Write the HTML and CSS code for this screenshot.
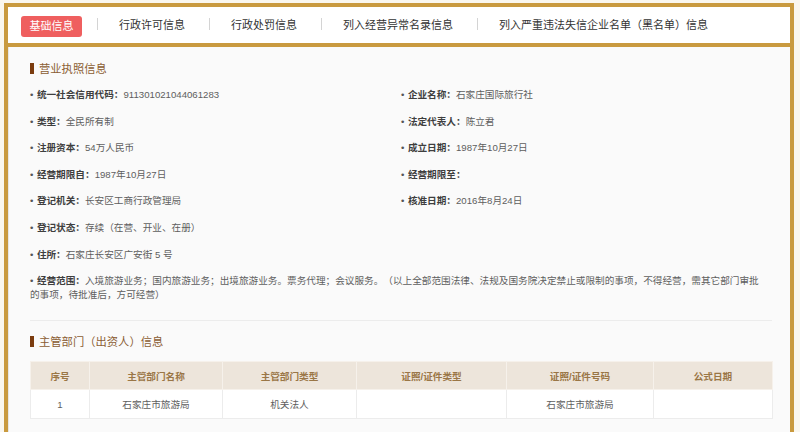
FILE: index.html
```html
<!DOCTYPE html>
<html lang="zh-CN">
<head>
    <meta charset="UTF-8">
    <title>基础信息</title>
    <link rel="stylesheet" href="styles.css">
</head>
<body>
    <div class="wrap">
        <ul class="tabs">
            <li class="tab active">基础信息</li>
            <li class="tab">行政许可信息</li>
            <li class="tab">行政处罚信息</li>
            <li class="tab">列入经营异常名录信息</li>
            <li class="tab">列入严重违法失信企业名单（黑名单）信息</li>
        </ul>

        <div class="panel">
            <!-- 营业执照信息 -->
            <div class="section">
                <h3 class="title">营业执照信息</h3>
                <ul class="info">
                    <li><span class="dot">•</span><b>统一社会信用代码：</b>911301021044061283</li>
                    <li><span class="dot">•</span><b>企业名称：</b>石家庄国际旅行社</li>
                    <li><span class="dot">•</span><b>类型：</b>全民所有制</li>
                    <li><span class="dot">•</span><b>法定代表人：</b>陈立君</li>
                    <li><span class="dot">•</span><b>注册资本：</b>54万人民币</li>
                    <li><span class="dot">•</span><b>成立日期：</b>1987年10月27日</li>
                    <li><span class="dot">•</span><b>经营期限自：</b>1987年10月27日</li>
                    <li><span class="dot">•</span><b>经营期限至：</b></li>
                    <li><span class="dot">•</span><b>登记机关：</b>长安区工商行政管理局</li>
                    <li><span class="dot">•</span><b>核准日期：</b>2016年8月24日</li>
                    <li><span class="dot">•</span><b>登记状态：</b>存续（在营、开业、在册）</li>
                    <li class="solo"><span class="dot">•</span><b>住所：</b>石家庄长安区广安街 5 号</li>
                    <li class="full"><span class="dot">•</span><b>经营范围：</b>入境旅游业务；国内旅游业务；出境旅游业务。票务代理；会议服务。（以上全部范围法律、法规及国务院决定禁止或限制的事项，不得经营，需其它部门审批<br>的事项，待批准后，方可经营）</li>
                </ul>
            </div>

            <!-- 主管部门（出资人）信息 -->
            <div class="section">
                <h3 class="title">主管部门（出资人）信息</h3>
                <table class="grid">
                    <colgroup>
                        <col style="width: 59px">
                        <col style="width: 133px">
                        <col style="width: 134px">
                        <col style="width: 150px">
                        <col style="width: 147px">
                        <col style="width: 119px">
                    </colgroup>
                    <thead>
                        <tr>
                            <th>序号</th>
                            <th>主管部门名称</th>
                            <th>主管部门类型</th>
                            <th>证照/证件类型</th>
                            <th>证照/证件号码</th>
                            <th>公式日期</th>
                        </tr>
                    </thead>
                    <tbody>
                        <tr>
                            <td>1</td>
                            <td>石家庄市旅游局</td>
                            <td>机关法人</td>
                            <td></td>
                            <td>石家庄市旅游局</td>
                            <td></td>
                        </tr>
                    </tbody>
                </table>
            </div>
        </div>
    </div>
</body>
</html>
```

FILE: styles.css
```css
body { margin: 0; background-color: #faf7ef; font-family: "Liberation Sans", "Noto Sans CJK SC", sans-serif; text-spacing-trim: space-all; }
.wrap { margin: 3px 6px 0 4px; border: 4px solid #c99a3f; border-bottom: none; }

.tabs { display: flex; align-items: center; height: 36px; margin: 0; padding: 0 0 0 13px; list-style: none; background-color: #fff; border-bottom: 4px solid #c99a3f; font-size: 11px; color: #333; }
.tab { padding-right: 24px; line-height: 21px; white-space: nowrap; }
.tab + .tab::before { content: ""; display: inline-block; width: 1px; height: 12px; margin-right: 21px; background-color: #d4d4d4; vertical-align: -1px; }
.tab.active { margin: 3px 15px 0 0; padding: 0 8.5px; background-color: #ef5f5f; color: #fff; border-radius: 3px; }

.panel { background-color: #fafafa; border-left: 1px solid #e6e6e6; padding: 0 18px 40px 21px; }
.section { padding: 15px 0 18px; border-bottom: 1px solid #ececec; }
.section + .section { padding-top: 14px; border-bottom: none; }

.title { margin: 0 0 12px; font-size: 11.3px; font-weight: normal; line-height: 14px; color: #8b5d33; }
.title::before { content: ""; display: inline-block; width: 4px; height: 11px; margin-right: 5px; background-color: #7b3c0f; vertical-align: -1px; }

.info { display: grid; grid-template-columns: 1fr 1fr; row-gap: 12.6px; margin: 0; padding: 0; list-style: none; font-size: 9.65px; line-height: 14px; color: #5e5e5e; }
.info b { color: #3e3e3e; }
.info .solo { grid-column: 1; }
.info .full { grid-column: 1 / -1; }
.dot { margin-right: 3.5px; color: #555; }

.grid { width: 100%; border-collapse: collapse; table-layout: fixed; font-size: 9.65px; text-align: center; }
.grid th { height: 27px; padding: 0; background-color: #ede5db; color: #9a7646; border: 1px solid #f6f1eb; }
.grid td { height: 28px; padding: 0; background-color: #fff; color: #5e5e5e; border: 1px solid #ececec; }
```
